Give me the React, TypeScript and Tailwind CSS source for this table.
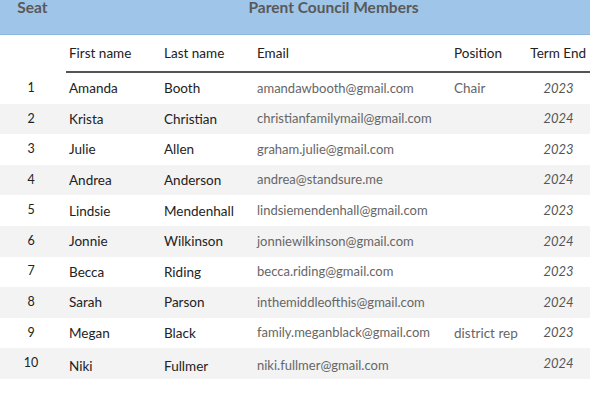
const members = [
  { seat: 1, first: 'Amanda', last: 'Booth', email: 'amandawbooth@gmail.com', position: 'Chair', term: '2023' },
  { seat: 2, first: 'Krista', last: 'Christian', email: 'christianfamilymail@gmail.com', position: '', term: '2024' },
  { seat: 3, first: 'Julie', last: 'Allen', email: 'graham.julie@gmail.com', position: '', term: '2023' },
  { seat: 4, first: 'Andrea', last: 'Anderson', email: 'andrea@standsure.me', position: '', term: '2024' },
  { seat: 5, first: 'Lindsie', last: 'Mendenhall', email: 'lindsiemendenhall@gmail.com', position: '', term: '2023' },
  { seat: 6, first: 'Jonnie', last: 'Wilkinson', email: 'jonniewilkinson@gmail.com', position: '', term: '2024' },
  { seat: 7, first: 'Becca', last: 'Riding', email: 'becca.riding@gmail.com', position: '', term: '2023' },
  { seat: 8, first: 'Sarah', last: 'Parson', email: 'inthemiddleofthis@gmail.com', position: '', term: '2024' },
  { seat: 9, first: 'Megan', last: 'Black', email: 'family.meganblack@gmail.com', position: 'district rep', term: '2023' },
  { seat: 10, first: 'Niki', last: 'Fullmer', email: 'niki.fullmer@gmail.com', position: '', term: '2024' },
]

export default function App() {
  return (
    <div className="w-[597px] h-[403px] bg-white overflow-hidden font-['Lato',sans-serif] text-[13.5px]">
      <div className="w-[590px]">
        {/* Title band */}
        <div className="h-[35px] bg-[#9fc5e8] border-b border-[#8fb8dd] flex items-start">
          <div className="w-[65px] text-center font-bold text-[15.5px] text-[#595959] leading-none">Seat</div>
          <div className="flex-1 text-center font-bold text-[15.5px] text-[#595959] leading-none pl-[12px]">
            Parent Council Members
          </div>
        </div>

        {/* Column headers */}
        <div className="flex items-center h-[36px] pl-[66px] text-[#222] whitespace-nowrap">
          <div className="w-[95px] pl-[3px]">First name</div>
          <div className="w-[93px] pl-[3px]">Last name</div>
          <div className="w-[197px] pl-[3px]">Email</div>
          <div className="w-[76px] pl-[3px]">Position</div>
          <div className="flex-1 text-right pr-[4px]">Term End</div>
        </div>
        <div className="ml-[66px] h-[2px] bg-[#555]" />

        {/* Rows */}
        {members.map((m, i) => (
          <div
            key={m.seat}
            className={`flex items-center h-[30.6px] whitespace-nowrap ${i % 2 === 1 ? 'bg-[#f3f3f3]' : 'bg-white'}`}
          >
            <div className="w-[62px] text-center text-[12.5px] text-[#222]">{m.seat}</div>
            <div className={`flex items-center flex-1 ${i === 9 ? 'pt-[5px]' : ''}`}>
              <div className="w-[99px] pl-[7px] text-[#222]">{m.first}</div>
              <div className="w-[93px] pl-[3px] text-[#222]">{m.last}</div>
              <div className="w-[197px] pl-[3px] text-[#666] text-[13px]">{m.email}</div>
              <div className="w-[80px] pl-[3px] text-[#666]">{m.position}</div>
              <div className={`flex-1 text-center italic text-[#555] text-[13px] pr-[4px] ${i === 9 ? '-mt-[5px]' : ''}`}>{m.term}</div>
            </div>
          </div>
        ))}
      </div>
    </div>
  )
}
